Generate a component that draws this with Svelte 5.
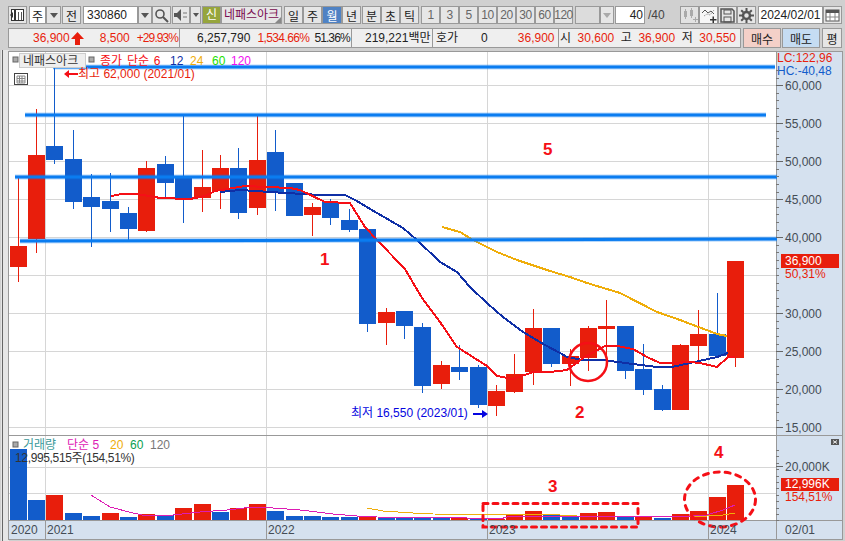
<script>
  const R = '#e81e0c', B = '#125ccb';
  // x, bodyTop, bodyBottom, wickTop, wickBottom, colour
  const candles = [
    [10,246,267,177,282,R],[28,155,239,109,253,R],[46,146,160,67,164,B],[65,159,202,130,209,B],
    [83,197,207,174,247,B],[102,201,209,173,232,B],[120,213,229,207,240,B],[138,168,231,161,232,R],
    [157,164,183,156,199,B],[175,177,198,115,223,B],[194,187,198,150,212,R],[212,168,191,155,209,R],
    [230,168,213,148,219,B],[249,160,208,115,215,R],[267,152,193,130,211,B],[286,183,216,183,216,B],
    [304,207,215,203,236,R],[322,202,218,199,225,B],[341,220,230,209,232,B],[359,229,324,229,332,B],
    [378,312,323,308,345,R],[396,311,326,311,339,B],[414,327,386,323,393,B],[433,365,384,361,389,R],
    [451,367,372,345,380,B],[470,367,405,365,408,B],[488,391,406,385,416,R],[506,374,392,354,393,R],
    [525,328,372,309,385,R],[543,328,364,328,367,B],[562,356,364,349,386,R],[580,328,358,326,371,R],
    [598,326,329,300,360,R],[617,326,371,326,379,B],[635,369,390,344,395,B],[654,389,410,385,411,B],
    [672,345,410,344,410,R],[690,334,346,310,363,R],[709,334,356,293,356,B],[727,261,358,261,367,R]
  ];
  // x, top, colour
  const volumes = [
    [10,449,B],[28,500,B],[46,495,R],[65,513,B],[83,516,B],[102,513,R],[120,517,B],[138,514,R],
    [157,515,B],[175,508,R],[194,504,R],[212,512,B],[230,508,R],[249,504,R],[267,511,B],[286,516,B],
    [304,516,B],[322,517,B],[341,517,B],[359,516,R],[378,518,B],[396,518,B],[414,518,B],[433,518,B],
    [451,518,R],[470,519,B],[488,519,R],[506,514,R],[525,511,R],[543,515,B],[562,517,B],[580,513,R],
    [598,512,R],[617,517,B],[635,516,R],[654,518,B],[672,514,R],[690,511,R],[709,497,R],[727,485,R]
  ];
  const ma6 = '111,196 122,194 137,194 155,197 160,198 190,199 205,196 215,191 245,186 290,188 300,190 325,202 350,203 365,227 377,240 405,269 422,298 440,322 457,347 487,366 497,376 513,379 533,372 550,372 567,370 583,358 605,346 617,346 633,349 647,357 660,363 672,363 690,362 700,363 717,367 728,357 735,357';
  const ma12 = '220,192 240,190 270,192 320,195 345,195 355,200 377,213 403,228 417,240 440,262 457,272 470,287 488,304 503,317 523,332 545,345 560,353 567,357 583,360 603,360 633,364 657,367 672,367 690,363 717,357 728,353';
  const ma24 = '442,227 460,232 473,240 497,252 517,260 550,271 570,277 587,283 620,293 657,312 680,320 717,334 727,336';
  const volMa5 = '91,495 110,507 133,513 147,516 173,515 200,512 227,510 253,507 273,508 300,510 317,512 333,514 357,516 377,517 467,518 500,519 507,517 600,516 690,516 707,515 723,510 735,505';
  const volMa20 = '367,508 383,511 413,513 433,514 560,515 577,516 707,516 723,515 735,513';
  const trend = [[53,67,775,67],[25,115,766,115],[15,177,777,177],[20,241,777,239]];
  const gridH = [85,123,161,199,237,275,313,351,389,427,467,493];
  const gridV = [45,266,487,708];
  const priceAxis = [[85,'60,000'],[123,'55,000'],[161,'50,000'],[199,'45,000'],[237,'40,000'],[313,'30,000'],[351,'25,000'],[389,'20,000'],[427,'15,000']];
  const minor = Array.from({ length: 48 }, (_, i) => 70 + i * 7.6);
  const volMinor = Array.from({ length: 12 }, (_, i) => 450 + i * 6.4);
  const periods = ['1','3','5','10','20','30','60','120'];
</script>

<div class="page">
  <div class="row tools">
    <button class="btn w19">
      <svg width="15" height="14" viewBox="0 0 15 14"><rect x="1.5" y="1.5" width="12" height="11" fill="#fff" stroke="#333"/><rect x="4" y="1" width="2" height="12" fill="#333"/><rect x="8" y="4" width="1" height="8" fill="#555"/><rect x="11" y="4" width="1" height="8" fill="#555"/><path d="M0 7l3-3v6z" fill="#333"/></svg>
    </button>
    <span class="field w17 m2">주</span>
    <button class="btn w15"><i class="caret"></i></button>
    <button class="btn w19 m1">전</button>
    <span class="field code m2">330860</span>
    <button class="btn w14"><i class="caret"></i></button>
    <button class="btn w19">
      <svg width="15" height="15" viewBox="0 0 15 15"><circle cx="6" cy="6" r="4" fill="none" stroke="#555" stroke-width="1.6"/><path d="M9 9l5 5" stroke="#555" stroke-width="2"/></svg>
    </button>
    <button class="btn w18 m1">
      <svg width="14" height="12" viewBox="0 0 14 12"><path d="M0 4h3l4-4v12l-4-4H0z" fill="#555"/><path d="M9 4h2M9 8h2M12 3v2M12 7v2" stroke="#777"/></svg>
    </button>
    <button class="btn w11"><i class="caret small"></i></button>
    <span class="sin m1">신</span>
    <span class="stock">네패스아크<i class="corner"></i></span>
    <button class="btn w19 m2">일</button>
    <button class="btn w19">주</button>
    <button class="btn w20 active">월</button>
    <button class="btn w19">년</button>
    <button class="btn w19 m1">분</button>
    <button class="btn w19">초</button>
    <button class="btn w19">틱</button>
    <div class="group m2">
      {#each periods as p}
        <button class="btn w19 muted">{p}</button>
      {/each}
    </div>
    <span class="blank m2"></span>
    <button class="btn w14"><i class="caret pale"></i></button>
    <span class="field count m1">40</span>
    <span class="total">/40</span>
    <button class="btn w19 icon1">
      <svg width="16" height="16" viewBox="0 0 16 16"><g fill="#aaa"><rect x="2" y="4" width="3" height="6"/><rect x="3" y="2" width="1" height="10"/><rect x="8" y="3" width="3" height="6"/><rect x="9" y="1" width="1" height="10"/><path d="M11 12h2v-2h1v2h2v1h-2v2h-1v-2h-2z"/></g></svg>
    </button>
    <button class="btn w19 whiteish">
      <svg width="16" height="16" viewBox="0 0 16 16"><path d="M1 6l3-3 3 3 3-2 3 3" fill="none" stroke="#555"/><path d="M3 9l3-2 3 1 4-5" fill="none" stroke="#888" stroke-dasharray="1 1"/><path d="M9 12h2.500v-2.500h1.500v2.500h2.500v1.500h-2.500v2.500h-1.500v-2.500h-2.500z" fill="#333"/></svg>
    </button>
    <button class="btn w19">
      <svg width="15" height="15" viewBox="0 0 15 15"><path d="M1 1h11l2 2v11H1z" fill="none" stroke="#555" stroke-width="1.500"/><rect x="4" y="2" width="7" height="4" fill="none" stroke="#555"/><rect x="4" y="9" width="7" height="5" fill="none" stroke="#555"/></svg>
    </button>
    <button class="btn w19">
      <svg width="15" height="15" viewBox="0 0 15 15"><circle cx="7.500" cy="7.500" r="3.500" fill="none" stroke="#555" stroke-width="2.500"/><path d="M7.500 0v3M7.500 12v3M0 7.500h3M12 7.500h3M2.200 2.200l2.100 2.100M10.700 10.700l2.100 2.100M2.200 12.800l2.100-2.100M10.700 4.300l2.100-2.100" stroke="#555" stroke-width="2"/></svg>
    </button>
    <span class="field date m2">2024/02/01</span>
    <button class="btn w19">
      <svg width="15" height="13" viewBox="0 0 15 13"><rect x="1" y="1" width="13" height="11" fill="#fff" stroke="#555"/><rect x="1" y="1" width="13" height="3" fill="#555"/><path d="M5 4v8M10 4v8M1 8h13" stroke="#888"/></svg>
    </button>
  </div>

  <div class="row quote">
    <div class="cell c1">
      <span class="red">36,900</span>
      <svg class="up" width="13" height="13" viewBox="0 0 13 13"><path d="M6.500 0L13 7H9v6H4V7H0z" fill="#e81e0c"/></svg>
      <span class="red v2">8,500</span>
      <span class="red v3">+29.93%</span>
    </div>
    <div class="cell c2">
      <span class="v4">6,257,790</span>
      <span class="red v5">1,534.66%</span>
      <span class="v6">51.36%</span>
    </div>
    <div class="cell c3"><span class="v7">219,221백만</span></div>
    <div class="cell c4">
      <span class="v8">호가</span>
      <span class="v9">0</span>
      <span class="red v10">36,900</span>
    </div>
    <div class="cell c5">
      <span>시</span><span class="red">30,600</span>
      <span>고</span><span class="red">36,900</span>
      <span>저</span><span class="red">30,550</span>
    </div>
    <button class="trade buy">매수</button>
    <button class="trade sell">매도</button>
    <button class="trade flat">평</button>
  </div>

  <svg class="chart" viewBox="0 50 845 491" width="845" height="491">
    <rect x="0" y="50" width="845" height="491" fill="#d0d0d0"/>
    <rect x="1" y="50" width="8" height="491" fill="#e6e6e6"/>
    <rect x="2" y="50" width="1" height="491" fill="#666"/>
    <rect x="8.500" y="51.500" width="768" height="488" fill="#fff" stroke="#999"/>
    <rect x="776.500" y="51.500" width="66" height="488" fill="#d5e1ef" stroke="#999"/>
    <rect x="9" y="521" width="767" height="18" fill="#d5e1ef"/>

    {#each gridH as y}
      <line x1="9" x2="776" y1={y + .5} y2={y + .5} stroke="#d6d6d6"/>
    {/each}
    {#each gridV as x}
      <line x1={x + .5} x2={x + .5} y1="52" y2="520" stroke="#d6d6d6"/>
    {/each}
    <line x1="8" x2="843" y1="435.500" y2="435.500" stroke="#999"/>
    <line x1="8" x2="843" y1="520.500" y2="520.500" stroke="#999"/>
    {#each gridV as x}
      <line x1={x + .5} x2={x + .5} y1="521" y2="539" stroke="#999"/>
    {/each}

    <!-- price candles -->
    {#each candles as [x, t, b, wt, wb, c]}
      <line x1={x + 8.500} x2={x + 8.500} y1={wt} y2={wb} stroke={c}/>
      <rect {x} y={t} width="17" height={b - t} fill={c}/>
    {/each}

    <polyline class="ma" points={ma24} stroke="#efad0a"/>
    <polyline class="ma" points={ma12} stroke="#0f2fa6"/>
    <polyline class="ma" points={ma6} stroke="#f50f16"/>

    <!-- trend lines -->
    {#each trend as [x1, y1, x2, y2]}
      <line {x1} {y1} {x2} {y2} stroke="#0a7cf0" stroke-opacity=".3" stroke-width="5"/>
      <line {x1} {y1} {x2} {y2} stroke="#0a7cf0" stroke-width="3"/>
    {/each}

    <!-- volume -->
    {#each volumes as [x, t, c]}
      <rect {x} y={t} width="17" height={520 - t} fill={c}/>
    {/each}
    <polyline class="vma" points={volMa20} stroke="#efad0a"/>
    <polyline class="vma" points={volMa5} stroke="#dd1cb4"/>

    <!-- annotations -->
    <circle cx="588" cy="362" r="19" fill="none" stroke="#f50f16" stroke-width="2.500"/>
    <rect x="483" y="503.500" width="155" height="23.500" fill="none" stroke="#f50f16" stroke-width="3" stroke-dasharray="5 5" stroke-linecap="round"/>
    <ellipse cx="720" cy="499.500" rx="35.500" ry="27.500" fill="none" stroke="#f50f16" stroke-width="3" stroke-dasharray="5 6" stroke-linecap="round"/>
    <text class="mark" x="320" y="265">1</text>
    <text class="mark" x="543" y="155">5</text>
    <text class="mark" x="575" y="418">2</text>
    <text class="mark" x="548" y="492">3</text>
    <text class="mark" x="714" y="458">4</text>

    <!-- price legend -->
    <rect class="sq" x="13" y="57" width="5" height="5"/>
    <rect x="19.500" y="53.500" width="66" height="14" fill="#eee" stroke="#ccc"/>
    <text class="t dark" x="23" y="65">네패스아크</text>
    <rect class="sq" x="89" y="57" width="5" height="5"/>
    <text class="t spaced" x="100" y="65" fill="#f50f16">종가 단순 6</text>
    <text class="t" x="170" y="65" fill="#0f2fa6">12</text>
    <text class="t" x="190" y="65" fill="#efad0a">24</text>
    <text class="t" x="212" y="65" fill="#22e000">60</text>
    <text class="t" x="231" y="65" fill="#f010f0">120</text>
    <rect x="14.500" y="73.500" width="13" height="11" fill="#fff" stroke="#444"/>
    <path d="M17 76h8v7h-8zM19.500 76v7M22 76v7M17 78.500h8M17 81h8" fill="none" stroke="#888"/>
    <path d="M64 74l5-4v3h9v2h-9v3z" fill="#f50f16"/>
    <text class="t" x="78" y="78" fill="#e81e0c">최고 62,000 (2021/01)</text>
    <path d="M473 413h9v-3l6 4-6 4v-3h-9z" fill="#0505e0"/>
    <text class="t" x="351" y="417" fill="#0505e0">최저 16,550 (2023/01)</text>

    <!-- volume legend -->
    <rect class="sq" x="13" y="442" width="5" height="5"/>
    <text class="t" x="23" y="449" fill="#3a9a9a">거래량</text>
    <text class="t" x="67" y="449" fill="#dd1cb4">단순 5</text>
    <text class="t" x="110" y="449" fill="#efad0a">20</text>
    <text class="t" x="130" y="449" fill="#0aa050">60</text>
    <text class="t" x="150" y="449" fill="#777">120</text>
    <text class="t dark tight" x="15" y="462">12,995,515주(154,51%)</text>

    <!-- right axis -->
    <text class="t" x="777" y="62" fill="#e81e0c">LC:122,96</text>
    <text class="t" x="777" y="75" fill="#125ccb">HC:-40,48</text>
    {#each minor as y}
      <line x1="776" x2="779" y1={Math.round(y) + .5} y2={Math.round(y) + .5} stroke="#777"/>
    {/each}
    {#each priceAxis as [y, label]}
      <line x1="776" x2="783" y1={y + .5} y2={y + .5} stroke="#666"/>
      <text class="t axis" x="785" y={y + 5}>{label}</text>
    {/each}
    <rect x="781" y="254" width="58" height="14" fill="#e81e0c"/>
    <text class="t" x="785" y="265" fill="#fff">36,900</text>
    <text class="t" x="785" y="278" fill="#e81e0c">50,31%</text>

    {#each volMinor as y}
      <line x1="776" x2="779" y1={Math.round(y) + .5} y2={Math.round(y) + .5} stroke="#777"/>
    {/each}
    <line x1="776" x2="783" y1="466.500" y2="466.500" stroke="#666"/>
    <text class="t axis" x="785" y="471">20,000K</text>
    <rect x="781" y="478" width="58" height="13" fill="#e81e0c"/>
    <text class="t" x="785" y="488" fill="#fff">12,996K</text>
    <text class="t" x="785" y="501" fill="#e81e0c">154,51%</text>
    <rect x="831" y="439" width="8" height="6" fill="#555"/>
    <path d="M833 440.500l4 3M837 440.500l-4 3" stroke="#eee"/>

    <!-- time axis -->
    <text class="t axis" x="11" y="534">2020</text>
    <text class="t axis" x="47" y="534">2021</text>
    <text class="t axis" x="268" y="534">2022</text>
    <text class="t axis" x="489" y="534">2023</text>
    <text class="t axis" x="710" y="534">2024</text>
    <text class="t axis" x="785" y="534">02/01</text>
  </svg>
</div>

<style>
  :global(body) { margin: 0; }
  .page {
    width: 845px;
    height: 541px;
    overflow: hidden;
    display: flex;
    flex-direction: column;
    background: #d0d0d0;
    font: 12px "Liberation Sans", "Noto Sans CJK KR", sans-serif;
    color: #222;
  }
  .row { display: flex; align-items: stretch; flex: none; }
  .tools { height: 18px; padding: 6px 0 0 8px; margin-bottom: 4px; }
  .quote { height: 20px; padding-left: 8px; margin-bottom: 2px; }
  .chart { display: block; flex: none; }
  .group { display: flex; }
  .m1 { margin-left: 1px; }
  .m2 { margin-left: 2px; }

  button {
    font: inherit;
    color: #222;
    padding: 0;
    box-sizing: border-box;
    display: flex;
    align-items: center;
    justify-content: center;
    flex: none;
  }
  .btn { height: 18px; background: #e6e6e6; border: 1px solid #999; }
  .w11 { width: 11px; } .w14 { width: 14px; } .w15 { width: 15px; } .w17 { width: 17px; }
  .w18 { width: 18px; } .w19 { width: 19px; } .w20 { width: 20px; }
  .muted { color: #666; letter-spacing: -.5px; }
  .active { background: #4f82c4; color: #fff; }
  .whiteish { background: #f6f6f6; }
  .icon1 { margin-left: 15px; background: #e2e2e2; }

  .field {
    box-sizing: border-box;
    height: 18px;
    flex: none;
    background: #fff;
    border: 1px solid #999;
    display: flex;
    align-items: center;
    justify-content: center;
  }
  .code { width: 55px; justify-content: flex-start; padding-left: 3px; }
  .count { width: 30px; justify-content: flex-end; padding-right: 1px; }
  .total { width: 20px; flex: none; color: #444; line-height: 18px; padding-left: 3px; box-sizing: border-box; }
  .date { width: 65px; }
  .blank { width: 25px; flex: none; background: #dcdcdc; border: 1px solid #999; box-sizing: border-box; }

  .caret { width: 0; height: 0; border: 4px solid transparent; border-top: 5px solid #555; border-bottom: 0; }
  .caret.small { border-width: 4px 3px 0; border-top-color: #555; border-bottom: 0; }
  .caret.pale { border-top-color: #aaa; }

  .sin {
    width: 19px;
    flex: none;
    box-sizing: border-box;
    background: #96a53c;
    color: #fff;
    border: 1px solid #999;
    text-align: center;
    line-height: 16px;
  }
  .stock {
    position: relative;
    width: 61px;
    flex: none;
    box-sizing: border-box;
    background: #e6e6e6;
    border: 1px solid #999;
    color: #7a0a4e;
    line-height: 16px;
    text-align: center;
    white-space: nowrap;
  }
  .corner {
    position: absolute;
    right: 0;
    bottom: 0;
    border-left: 6px solid transparent;
    border-bottom: 6px solid #888;
  }

  .cell {
    box-sizing: border-box;
    flex: none;
    background: #efefef;
    border: 1px solid #999;
    display: flex;
    align-items: center;
    white-space: nowrap;
    line-height: 18px;
  }
  .red { color: #e81e0c; }
  .c1 { width: 172px; padding-left: 24px; }
  .c2 { width: 172px; padding-left: 17px; border-left: 0; }
  .c3 { width: 81px; padding-left: 13px; border-left: 0; }
  .c4 { width: 126px; padding-left: 3px; border-left: 0; }
  .c5 { width: 182px; border-left: 0; padding-left: 1px; justify-content: space-between; padding-right: 4px; }
  .up { margin-left: 1px; flex: none; }
  .v2 { margin-left: 16px; }
  .v3 { margin-left: 7px; letter-spacing: -.9px; }
  .v5 { margin-left: 7px; letter-spacing: -.6px; }
  .v6 { margin-left: 5px; letter-spacing: -.9px; }
  .v9 { margin-left: 23px; }
  .v10 { margin-left: 30px; }

  .trade {
    box-sizing: border-box;
    height: 20px;
    width: 38px;
    margin-left: 1px;
    border: 1px solid #999;
  }
  .buy { background: #f4d0c8; margin-left: 2px; }
  .sell { background: #c5dcf2; }
  .flat { background: #e6e6e6; width: 20px; margin-left: 2px; }

  .ma { fill: none; stroke-width: 2; shape-rendering: crispEdges; }
  .vma { fill: none; stroke-width: 1; shape-rendering: crispEdges; }
  .t { font: 12px "Liberation Sans", "Noto Sans CJK KR", sans-serif; }
  .spaced { word-spacing: 1.500px; }
  .tight { letter-spacing: -.35px; }
  .dark { fill: #333; }
  .axis { fill: #444c55; }
  .sq { fill: #aaa; stroke: #666; }
  .mark { font: bold 17px "Liberation Sans", sans-serif; fill: #f50f16; }
</style>
